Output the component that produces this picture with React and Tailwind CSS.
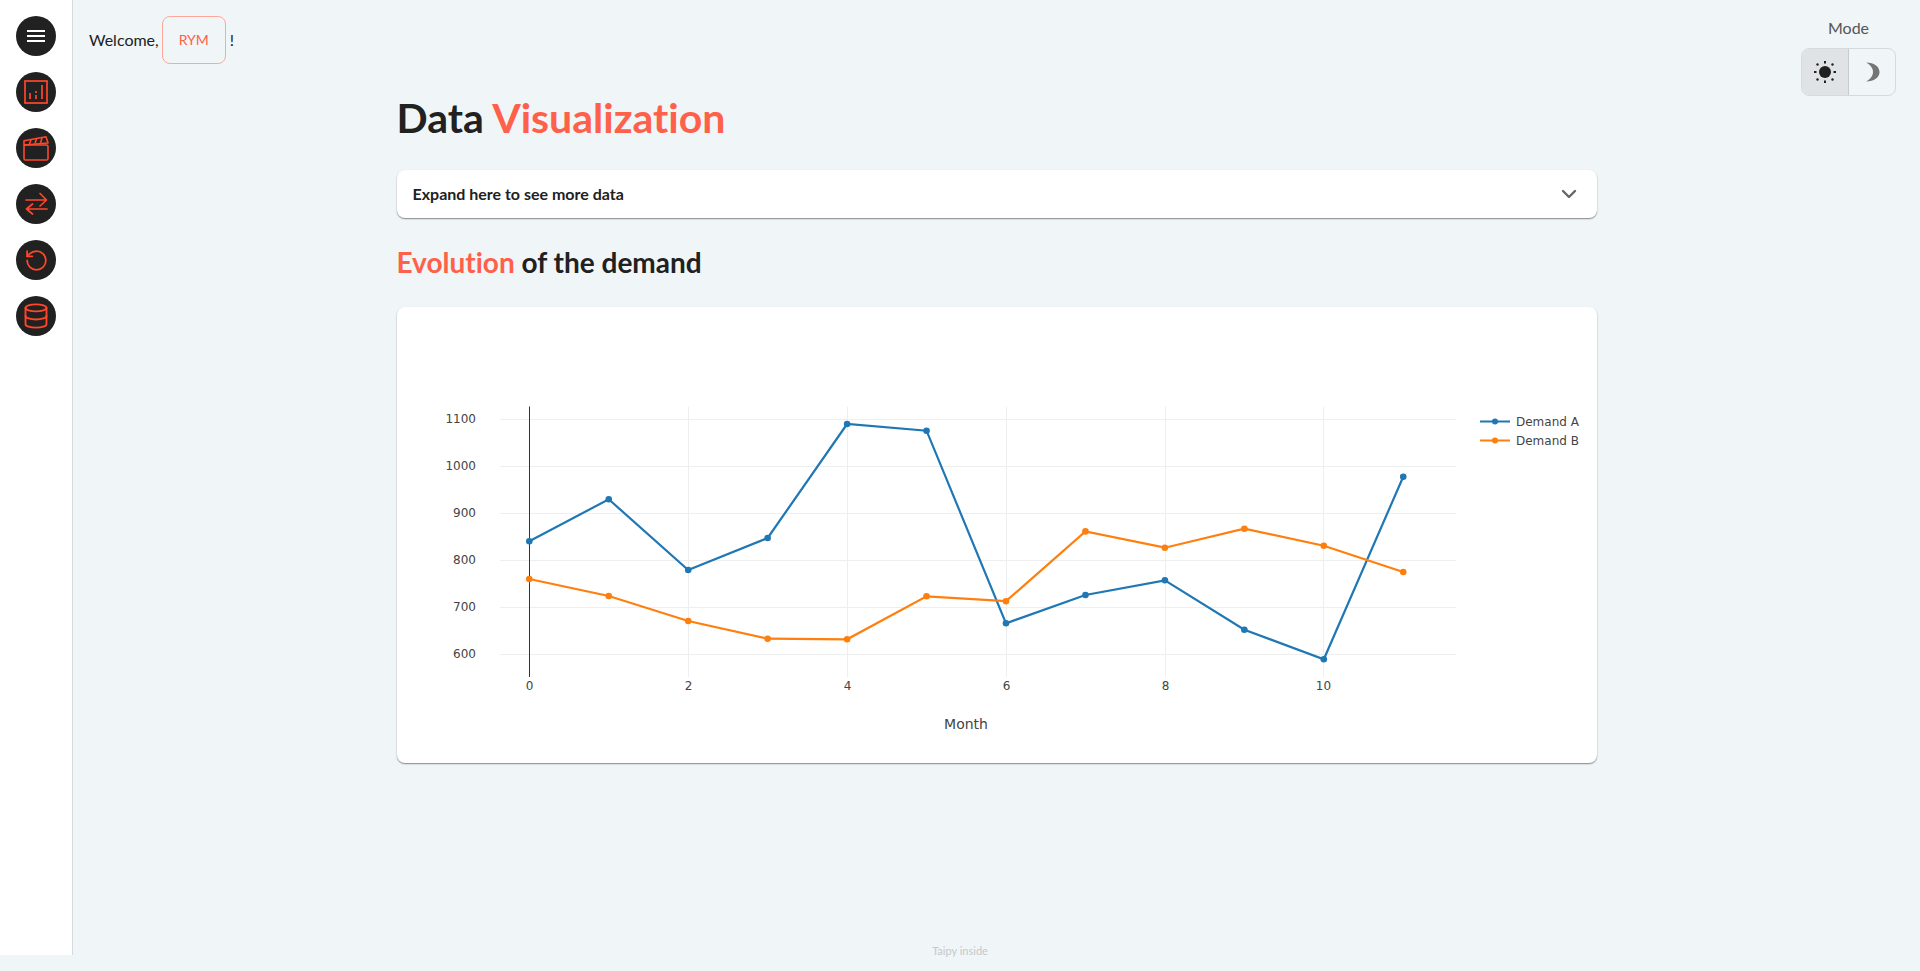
import React from 'react';
import { ChevronDown, RotateCcw, Database } from 'lucide-react';

const xAt = (m) => 529.3 + m * 79.45;

// y pixels read off the reference plot
const blue = [541.3, 499.3, 570, 538, 424, 430.7, 623.3, 595, 580.3, 629.7, 659.3, 476.7];
const orange = [579, 596, 621, 638.7, 639.3, 596.3, 601.2, 531.4, 547.7, 528.7, 545.7, 572];
const yTicks = [[1100, 419.5], [1000, 466.5], [900, 513.5], [800, 560.5], [700, 607.5], [600, 654.5]];
const xTicks = [[2, 688.5], [4, 847.5], [6, 1006.5], [8, 1165.5], [10, 1323.5]];

function Series({ ys, color }) {
  return (
    <g>
      <polyline points={ys.map((y, i) => `${xAt(i)},${y}`).join(' ')} fill="none" stroke={color} strokeWidth="2.2" />
      {ys.map((y, i) => <circle key={i} cx={xAt(i)} cy={y} r="3.3" fill={color} />)}
    </g>
  );
}

// chart coordinates are page coordinates, shifted by the card origin
function DemandChart() {
  return (
    <svg viewBox="397 307 1200 456" className="w-full h-full block" style={{ fontFamily: '"DejaVu Sans", sans-serif' }}>
      {yTicks.map(([label, y]) => (
        <g key={label}>
          <line x1="500" x2="1456" y1={y} y2={y} stroke="#eee" strokeWidth="1" />
          <text x="476" y={y + 3} textAnchor="end" fontSize="12" fill="#444">{label}</text>
        </g>
      ))}
      {xTicks.map(([t, x]) => (
        <line key={t} x1={x} x2={x} y1="406.5" y2="677" stroke="#eee" strokeWidth="1" />
      ))}
      <line x1="529.5" x2="529.5" y1="406.5" y2="677" stroke="#333" strokeWidth="1" />
      <text x="529.5" y="690" textAnchor="middle" fontSize="12" fill="#444">0</text>
      {xTicks.map(([t, x]) => (
        <text key={t} x={x} y="690" textAnchor="middle" fontSize="12" fill="#444">{t}</text>
      ))}
      <text x="966" y="729" textAnchor="middle" fontSize="14" fill="#444">Month</text>
      <Series ys={blue} color="#1f77b4" />
      <Series ys={orange} color="#ff7f0e" />
      <line x1="1480" x2="1510" y1="421.5" y2="421.5" stroke="#1f77b4" strokeWidth="2" />
      <circle cx="1495" cy="421.5" r="3" fill="#1f77b4" />
      <text x="1516" y="425.5" fontSize="12" fill="#444">Demand A</text>
      <line x1="1480" x2="1510" y1="440.5" y2="440.5" stroke="#ff7f0e" strokeWidth="2" />
      <circle cx="1495" cy="440.5" r="3" fill="#ff7f0e" />
      <text x="1516" y="444.5" fontSize="12" fill="#444">Demand B</text>
    </svg>
  );
}

function MenuIcon() {
  return (
    <svg width="18" height="12" viewBox="0 0 18 12" fill="currentColor">
      <rect width="18" height="2" />
      <rect y="5" width="18" height="2" />
      <rect y="10" width="18" height="2" />
    </svg>
  );
}

function ChartIcon() {
  return (
    <svg width="24" height="24" viewBox="0 0 24 24" fill="none" stroke="currentColor" strokeWidth="1.7">
      <rect x="1" y="1" width="22" height="22" />
      <path d="M6 13v6M12 11v2M12 15v4M18 5v14" />
    </svg>
  );
}

function ClapIcon() {
  return (
    <svg width="26" height="26" viewBox="0 0 26 26" fill="none" stroke="currentColor" strokeWidth="1.6" strokeLinejoin="round">
      <rect x="1" y="10" width="24" height="15" rx="1.5" />
      <path d="M1 10V5.700L23 1.700 25 8 1 10z" />
      <path d="M6.500 9 8 4.800M12 8.500l1.500-4.700M17.500 8l1.500-5" />
    </svg>
  );
}

function SwapIcon() {
  return (
    <svg width="40" height="40" viewBox="0 0 40 40" fill="none" stroke="currentColor" strokeWidth="1.7" strokeLinecap="round" strokeLinejoin="round">
      <path d="M10 16h20M24 9.500l6.500 6.500L24 22" />
      <path d="M31 25H11M16.500 20l-6 5 6 5" />
    </svg>
  );
}

const navIcons = [
  <ChartIcon key="chart" />,
  <ClapIcon key="clap" />,
  <SwapIcon key="swap" />,
  <RotateCcw key="undo" size={25} strokeWidth={1.7} />,
  <Database key="db" size={28} strokeWidth={1.6} />,
];

function SunIcon() {
  return (
    <svg width="24" height="24" viewBox="0 0 24 24" fill="#212121">
      <circle cx="12" cy="12" r="6" />
      <rect x="11" y="1" width="2" height="2.500" />
      <rect x="11" y="20.500" width="2" height="2.500" />
      <rect x="1" y="11" width="2.500" height="2" />
      <rect x="20.500" y="11" width="2.500" height="2" />
      <circle cx="4.500" cy="4.500" r="1.200" />
      <circle cx="19.500" cy="4.500" r="1.200" />
      <circle cx="4.500" cy="19.500" r="1.200" />
      <circle cx="19.500" cy="19.500" r="1.200" />
    </svg>
  );
}

function MoonIcon() {
  return (
    <svg width="24" height="24" viewBox="0 0 24 24" fill="#757575">
      <path d="M6 2.500C14 2.500 19.500 6.500 19.500 12S14 21.500 6 21.500C10 19.500 13 16 13 12S10 4.500 6 2.500z" />
    </svg>
  );
}

export default function App() {
  return (
    <div className="min-h-[971px] bg-[#f0f5f7] relative text-[#212121] [font-variant-ligatures:none]" style={{ fontFamily: 'Lato, sans-serif' }}>
      <div className="flex h-[955px]">
        {/* Sidebar */}
        <nav className="w-[73px] shrink-0 bg-white border-r border-[#d5dadd] flex flex-col items-center gap-4 pt-4">
          <button className="w-10 h-10 rounded-full bg-[#212121] text-white flex items-center justify-center">
            <MenuIcon />
          </button>
          {navIcons.map((icon, i) => (
            <button key={i} className="w-10 h-10 rounded-full bg-[#212121] text-[#ff462b] flex items-center justify-center">
              {icon}
            </button>
          ))}
        </nav>

        <main className="flex-1 relative">
          <div className="flex items-center pt-4 pl-4 text-base leading-6">
            <span>Welcome,</span>
            <span className="ml-[3px] w-16 h-12 border border-[#ffa79b] rounded-lg flex items-center justify-center text-sm text-[#ff6049]">RYM</span>
            <span className="ml-1">!</span>
          </div>

          <div className="absolute top-[16px] right-[24px] flex flex-col items-center">
            <span className="text-base leading-6 text-[#555]">Mode</span>
            <div className="flex mt-[8px] w-[95px] h-12 border border-[#d5dadd] rounded-lg overflow-hidden">
              <div className="w-1/2 bg-[#dfe3e6] border-r border-[#c6cbce] flex items-center justify-center"><SunIcon /></div>
              <div className="w-1/2 flex items-center justify-center"><MoonIcon /></div>
            </div>
          </div>

          <div className="w-[1200px] mx-auto mt-[27px]">
            <h1 className="text-[41px] leading-[54px] font-bold">Data <span className="text-[#ff6049]">Visualization</span></h1>
            <div className="mt-[25px] h-[48px] bg-white rounded-lg shadow-[0_1px_1.5px_rgba(0,0,0,0.45)] flex items-center justify-between px-4">
              <span className="text-base font-bold">Expand here to see more data</span>
              <ChevronDown size={24} strokeWidth={2.4} className="text-[#666]" />
            </div>
            <h2 className="mt-[27px] text-[28px] leading-[34px] font-bold"><span className="text-[#ff6049]">Evolution</span> of the demand</h2>
            <div className="mt-[28px] h-[456px] bg-white rounded-lg shadow-[0_1px_1.5px_rgba(0,0,0,0.45)] overflow-hidden">
              <DemandChart />
            </div>
          </div>
        </main>
      </div>
      <div className="absolute bottom-[12px] left-0 right-0 text-center text-[11px] text-[#c4c8cb]">Taipy inside</div>
    </div>
  );
}
